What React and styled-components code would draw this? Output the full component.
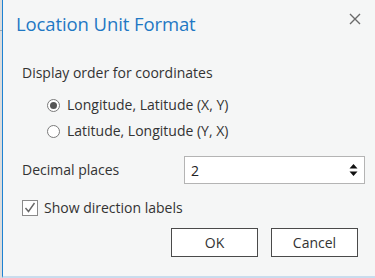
import styled, { createGlobalStyle } from "styled-components";

const Global = createGlobalStyle`
  html, body {
    margin: 0;
    padding: 0;
    background: #f5f6f6;
  }
  body {
    font-family: "Open Sans", "Noto Sans", sans-serif;
  }
`;

const Frame = styled.div`
  display: flex;
  width: 375px;
  height: 278px;
  overflow: hidden;
`;

const BackStrip = styled.div`
  width: 2px;
  background: linear-gradient(
    #dcdcdc 0px,
    #dcdcdc 30px,
    #9aa4ad 30px,
    #9aa4ad 31px,
    #dcdcdc 31px
  );
`;

const Dialog = styled.div`
  flex: 1;
  display: flex;
  flex-direction: column;
  background: #f5f6f6;
  border-left: 1px solid #1e82d2;
  border-bottom: 2px solid #c9dced;
  box-sizing: border-box;
`;

const Header = styled.div`
  display: flex;
  align-items: center;
  justify-content: space-between;
  height: 46px;
  padding: 0 14px 0 13px;
`;

const Title = styled.h1`
  margin: 0;
  font-size: 18.5px;
  font-weight: 400;
  color: #1f78c4;
  letter-spacing: -0.1px;
`;

const Close = styled.button`
  border: 0;
  background: none;
  padding: 0;
  width: 12px;
  height: 12px;
  margin-top: -8px;
  display: flex;
  color: #6a6a6a;
`;

const Body = styled.div`
  display: flex;
  flex-direction: column;
  padding: 17px 10px 0 19px;
  color: #333;
  font-size: 14px;
`;

const Label = styled.div`
  line-height: 20px;
`;

const RadioGroup = styled.div`
  display: flex;
  flex-direction: column;
  gap: 6px;
  margin: 12px 0 0 25px;
`;

const RadioRow = styled.label`
  display: flex;
  align-items: center;
  gap: 7px;
  line-height: 20px;
`;

const RadioMark = styled.span`
  width: 13px;
  height: 13px;
  border-radius: 50%;
  border: 1px solid #7a7a7a;
  background: #fff;
  box-sizing: border-box;
  display: flex;
  align-items: center;
  justify-content: center;

  &::after {
    content: "";
    width: 7px;
    height: 7px;
    border-radius: 50%;
    background: ${(p) => (p.$checked ? "#555" : "transparent")};
  }
`;

const FieldRow = styled.div`
  display: flex;
  align-items: center;
  justify-content: space-between;
  margin-top: 15px;
`;

const Spin = styled.div`
  display: flex;
  align-items: center;
  justify-content: space-between;
  width: 181px;
  height: 28px;
  box-sizing: border-box;
  border: 1px solid #b4b4b4;
  background: #fff;
  padding: 0 6px 0 6px;
  color: #222;
`;

const CheckRow = styled.label`
  display: flex;
  align-items: center;
  gap: 6px;
  margin-top: 14px;
`;

const CheckBox = styled.span`
  width: 16px;
  height: 16px;
  box-sizing: border-box;
  border: 1px solid #8a8a8a;
  background: #fff;
  display: flex;
  align-items: center;
  justify-content: center;
`;

const Buttons = styled.div`
  display: flex;
  justify-content: flex-end;
  gap: 13px;
  margin-top: 11px;
  padding-right: 7px;
`;

const Button = styled.button`
  width: 87px;
  height: 29px;
  box-sizing: border-box;
  border: 1px solid #4a4a4a;
  background: #fff;
  font-family: inherit;
  font-size: 14px;
  color: #333;
  padding: 0;
`;

export default function App() {
  return (
    <>
      <Global />
      <Frame>
        <BackStrip />
        <Dialog>
          <Header>
            <Title>Location Unit Format</Title>
            <Close aria-label="Close">
              <svg width="12" height="12" viewBox="0 0 12 12">
                <path d="M1 1L11 11M11 1L1 11" stroke="currentColor" strokeWidth="1.4" />
              </svg>
            </Close>
          </Header>
          <Body>
            <Label>Display order for coordinates</Label>
            <RadioGroup>
              <RadioRow>
                <RadioMark $checked />
                Longitude, Latitude (X, Y)
              </RadioRow>
              <RadioRow>
                <RadioMark />
                Latitude, Longitude (Y, X)
              </RadioRow>
            </RadioGroup>
            <FieldRow>
              <Label>Decimal places</Label>
              <Spin>
                <span>2</span>
                <svg width="9" height="14" viewBox="0 0 9 14">
                  <path d="M4.5 1L8.5 5.5H0.5Z M4.5 13L8.5 8.5H0.5Z" fill="#111" />
                </svg>
              </Spin>
            </FieldRow>
            <CheckRow>
              <CheckBox>
                <svg width="12" height="11" viewBox="0 0 12 11">
                  <path d="M1.5 6L4.5 9.5L10.5 1" fill="none" stroke="#666" strokeWidth="1.4" />
                </svg>
              </CheckBox>
              Show direction labels
            </CheckRow>
            <Buttons>
              <Button>OK</Button>
              <Button>Cancel</Button>
            </Buttons>
          </Body>
        </Dialog>
      </Frame>
    </>
  );
}
